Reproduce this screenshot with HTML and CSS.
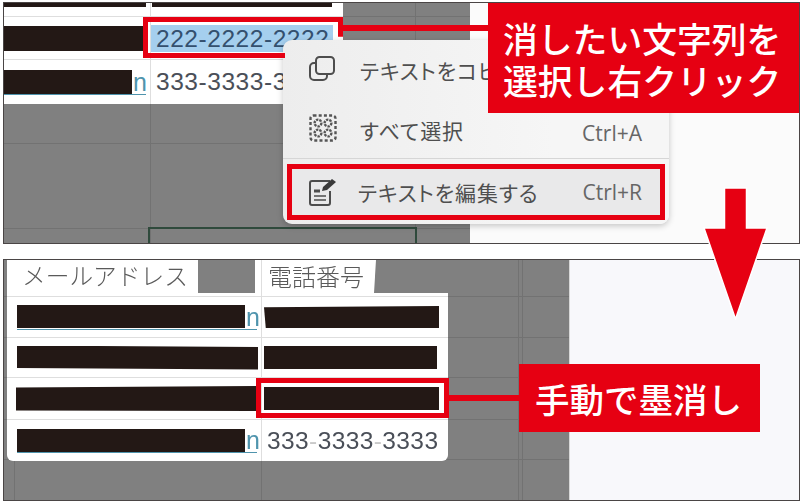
FILE: index.html
```html
<!DOCTYPE html>
<html lang="ja">
<head>
    <meta charset="UTF-8">
    <meta name="viewport" content="width=device-width, initial-scale=1.0">
    <title>手動で墨消し</title>
    <link rel="stylesheet" href="styles.css">
</head>
<body>
    <div class="page">
        <!-- Top shot: context menu over the sheet -->
        <div class="shot">
            <div class="sheet sheet-top">
                <div class="table table-top">
                    <div class="cell"><span class="bar bar-t1"></span></div>
                    <div class="cell col2"><span class="bar bar-t2"></span></div>
                    <div class="cell line"><span class="bar bar-t3"></span></div>
                    <div class="cell col2 line"><span class="selected">222-2222-2222</span></div>
                    <div class="cell line"><span class="link link-top"><span class="bar bar-t4"></span><span class="link-n">n</span></span></div>
                    <div class="cell col2 line"><span class="phone phone-top">333-3333-3333</span></div>
                </div>
                <div class="active-cell"></div>
            </div>
            <div class="blank blank-top"></div>

            <div class="menu">
                <div class="menu-item">
                    <svg class="icon" viewBox="0 0 28 28" fill="none" stroke="#4d4d4d" stroke-width="2">
                        <rect x="7" y="1" width="18" height="17" rx="3.5"/>
                        <path d="M7 7H5a4 4 0 0 0-4 4v9a4 4 0 0 0 4 4h9a4 4 0 0 0 4-4v-2"/>
                    </svg>
                    <span class="menu-text">テキストをコピー</span>
                </div>
                <div class="menu-item item-all">
                    <svg class="icon" viewBox="0 0 28 28" fill="none" stroke="#555" stroke-width="2.4">
                        <rect x="1.5" y="1.5" width="25" height="25" rx="3" stroke-dasharray="3 2.2"/>
                        <circle cx="9" cy="9" r="3.4" stroke-dasharray="2.4 1"/>
                        <circle cx="19" cy="9" r="3.4" stroke-dasharray="2.4 1"/>
                        <circle cx="9" cy="19" r="3.4" stroke-dasharray="2.4 1"/>
                        <circle cx="19" cy="19" r="3.4" stroke-dasharray="2.4 1"/>
                    </svg>
                    <span class="menu-text text-all">すべて選択</span>
                    <span class="shortcut shortcut-all">Ctrl+A</span>
                </div>
                <div class="menu-sep"></div>
                <div class="menu-item item-edit">
                    <svg class="icon icon-edit" viewBox="0 0 28 28" fill="none" stroke="#4d4d4d" stroke-width="2">
                        <path d="M21 3H3a2 2 0 0 0-2 2v20a2 2 0 0 0 2 2h16a2 2 0 0 0 2-2V13"/>
                        <path d="M5 18h12M5 22h12" stroke-width="1.6"/>
                        <path d="M5 13h6" stroke-width="3"/>
                        <path d="M13 13l1-4 9-8 4 3-9 8z" fill="#3a3a3a" stroke="none"/>
                    </svg>
                    <span class="menu-text">テキストを編集する</span>
                    <span class="shortcut">Ctrl+R</span>
                </div>
            </div>

            <div class="red-box box-selected"></div>
            <div class="wire wire-top"></div>
            <div class="callout callout-top">消したい文字列を<br>選択し右クリック</div>
        </div>

        <!-- Bottom shot: cell blacked out by hand -->
        <div class="shot shot-bottom">
            <div class="sheet sheet-bottom">
                <div class="table table-bottom">
                    <div class="cell head">
                        <span class="tab tab-mail">メールアドレス</span>
                        <span class="patch patch-mail"></span>
                    </div>
                    <div class="cell col2 head">
                        <span class="tab tab-tel">電話番号</span>
                        <span class="patch patch-tel"></span>
                    </div>
                    <div class="cell line"><span class="link link-bottom"><span class="bar bar-b1"></span><span class="link-n">n</span></span></div>
                    <div class="cell col2 line"><span class="bar bar-b2"></span></div>
                    <div class="cell line"><span class="bar bar-b3"></span></div>
                    <div class="cell col2 line"><span class="bar bar-b4"></span></div>
                    <div class="cell line"><span class="bar bar-b5"></span></div>
                    <div class="cell col2 line"><span class="bar bar-b6"></span></div>
                    <div class="cell line"><span class="link link-bottom"><span class="bar bar-b7"></span><span class="link-n">n</span></span></div>
                    <div class="cell col2 line"><span class="phone phone-bottom">333<i>-</i>3333<i>-</i>3333</span></div>
                </div>
            </div>
            <div class="blank blank-bottom"></div>

            <div class="red-box box-manual"></div>
            <div class="wire wire-bottom"></div>
            <div class="callout callout-bottom">手動で墨消し</div>
        </div>

        <svg class="arrow" viewBox="0 0 67 134">
            <polygon points="22.5,2 44.5,2 44.5,42 65,42 33.5,133 2,42 22.5,42" fill="#e60012" stroke="#fff" stroke-width="1.5"/>
        </svg>
    </div>
</body>
</html>
```

FILE: styles.css
```css
body {
    margin: 0;
    background-color: #fff;
    font-family: "Noto Sans CJK JP", "Liberation Sans", sans-serif;
}
.page {
    position: relative;
    width: 797px;
    height: 501px;
    padding: 2px 0 0 3px;
    filter: blur(0.35px);
}
.shot {
    position: relative;
    display: flex;
    height: 240px;
    border: 1px solid #4a4545;
    overflow: hidden;
}
.shot-bottom {
    margin-top: 15px;
}

/* gray excel area */
.sheet {
    background-color: #808080;
}
.sheet-top {
    width: 466px;
    background-image:
        linear-gradient(#727272, #727272),
        linear-gradient(#727272, #727272),
        linear-gradient(#727272, #727272),
        linear-gradient(#727272, #727272),
        linear-gradient(#727272, #727272);
    background-repeat: no-repeat;
    background-size: 100% 1px, 100% 1px, 100% 1px, 1px 100%, 1px 100%;
    background-position: 0 13px, 0 140px, 0 225px, 146px 0, 411px 0;
}
.sheet-bottom {
    width: 565px;
    padding-left: 3px;
    box-sizing: border-box;
    background-image:
        linear-gradient(#727272, #727272),
        linear-gradient(#727272, #727272),
        linear-gradient(#727272, #727272),
        linear-gradient(#727272, #727272),
        linear-gradient(#727272, #727272),
        linear-gradient(#727272, #727272),
        linear-gradient(#727272, #727272),
        linear-gradient(#727272, #727272),
        linear-gradient(#727272, #727272);
    background-repeat: no-repeat;
    background-size: 100% 1px, 100% 1px, 100% 1px, 100% 1px, 100% 1px, 1px 100%, 1px 100%, 1px 100%, 1px 100%;
    background-position: 0 36px, 0 77px, 0 117px, 0 159px, 0 199px, 10px 0, 257px 0, 514px 0, 518px 0;
}
.blank {
    flex: 1;
}
.blank-top {
    background-color: #fbfbfb;
}
.blank-bottom {
    background-color: #f8f8fb;
    border-left: 1px solid #d8d8d8;
}

/* table */
.table {
    display: grid;
    background-color: #fff;
}
.table-top {
    width: 339px;
    grid-template-columns: 146px 193px;
    grid-template-rows: 13px 43px 45px;
}
.table-bottom {
    width: 441px;
    grid-template-columns: 254px 187px;
    grid-template-rows: 36px 41px 40px 42px 42px;
    border-radius: 0 0 6px 6px;
    overflow: hidden;
}
.cell {
    display: flex;
    align-items: center;
    min-width: 0;
}
.col2 {
    border-left: 1px solid #dedede;
}
.line {
    border-top: 1px solid #dedede;
}
.head {
    align-items: flex-start;
}

.bar {
    display: block;
    flex: none;
    background-color: #231815;
}
.bar-t1 { width: 142px; height: 4px; margin-bottom: 9px; }
.bar-t2 { width: 180px; height: 4px; margin: 0 0 9px 1px; }
.bar-t3 { width: 139px; height: 25px; }
.bar-t4 { width: 128px; height: 24px; }
.bar-b1, .bar-b7 { width: 228px; height: 23px; }
.bar-b2 { width: 175px; height: 22px; margin-left: 2px; clip-path: polygon(0 6%, 100% 0, 100% 100%, 1% 100%); }
.bar-b3 { width: 241px; height: 24px; margin-left: 10px; clip-path: polygon(0 0, 100% 6%, 100% 100%, 0 94%); }
.bar-b4 { width: 173px; height: 23px; margin-left: 2px; }
.bar-b5 { width: 240px; height: 25px; margin-left: 9px; clip-path: polygon(0 6%, 100% 0, 100% 100%, 0 98%); }
.bar-b6 { width: 175px; height: 23px; margin-left: 2px; }

.selected {
    width: 177px;
    height: 27px;
    padding-left: 5px;
    background-color: #a5cfee;
    color: #34506e;
    font: 24.5px/27px "Liberation Sans", sans-serif;
    letter-spacing: 0.55px;
    white-space: nowrap;
}
.phone {
    color: #4a4f58;
    font-family: "Liberation Sans", sans-serif;
    font-size: 24.5px;
    white-space: nowrap;
}
.phone i {
    font-style: normal;
    color: #c9c9c9;
}
.phone-top {
    margin-left: 5px;
    letter-spacing: 0.55px;
}
.phone-bottom {
    margin-left: 5px;
    letter-spacing: 0.4px;
}
.link {
    display: flex;
    align-items: center;
    border-bottom: 1px solid #4f94ad;
}
.link-top {
    width: 142px;
}
.link-bottom {
    width: 240px;
    margin-left: 10px;
    height: 24px;
}
.link-n {
    margin-left: 1px;
    color: #4f94ad;
    font: 25px/24px "Liberation Sans", sans-serif;
}

/* header row of the bottom table */
.tab {
    color: #5a5a5a;
    font-weight: 300;
    white-space: nowrap;
}
.tab-mail {
    flex: 1;
    padding-left: 15px;
    font-size: 23.7px;
    line-height: 30px;
}
.tab-tel {
    width: 112px;
    flex: none;
    padding-left: 6px;
    box-sizing: border-box;
    font-size: 24px;
    line-height: 31px;
}
.patch {
    display: block;
    height: 33px;
    background-color: #808080;
}
.patch-mail {
    width: 57px;
    margin-right: 6px;
}
.patch-tel {
    flex: 1;
    clip-path: polygon(2px 0, 100% 0, 100% 100%, 0 100%);
}

/* context menu */
.active-cell {
    position: absolute;
    left: 144px;
    top: 224px;
    width: 267px;
    height: 20px;
    border: 1px solid #2f4a3c;
    box-shadow: inset 0 0 0 1px #2f4a3c;
}
.menu {
    position: absolute;
    left: 279px;
    top: 37px;
    width: 386px;
    height: 184px;
    box-sizing: border-box;
    padding-top: 5px;
    border-radius: 9px;
    background: linear-gradient(90deg, #ededed, #f6f6f6 70%);
    box-shadow: 0 2px 6px rgba(0, 0, 0, 0.22);
}
.menu-item {
    display: flex;
    align-items: center;
    height: 50px;
    padding: 0 27px 0 26px;
}
.item-all {
    margin-top: 8px;
}
.text-all {
    padding-top: 4px;
}
.shortcut-all {
    padding-top: 10px;
}
.item-edit {
    height: 56px;
    margin: 5px 4px 0;
    padding: 0 18px 0 17px;
    box-sizing: border-box;
    border: 5px solid #e60012;
    background-color: #e9e9ea;
}
.menu-sep {
    height: 1px;
    margin-top: 5px;
    background-color: #d6d6d6;
}
.icon {
    width: 28px;
    height: 28px;
    margin-right: 23px;
    flex: none;
}
.icon-edit {
    margin-right: 21px;
}
.menu-text {
    color: #4f4f4f;
    font-size: 21px;
    font-feature-settings: "palt";
    letter-spacing: 0.9px;
    white-space: nowrap;
}
.shortcut {
    margin-left: auto;
    color: #666;
    font-family: "Open Sans", sans-serif;
    font-size: 21px;
}

/* red annotations */
.red-box {
    position: absolute;
    box-sizing: border-box;
    border: 5px solid #e60012;
}
.box-selected {
    left: 139px;
    top: 14px;
    width: 200px;
    height: 41px;
    clip-path: polygon(0 0, 100% 0, 100% 48%, 71% 48%, 71% 100%, 0 100%);
}
.box-manual {
    left: 252px;
    top: 118px;
    width: 193px;
    height: 40px;
}
.wire {
    position: absolute;
    height: 6px;
    background-color: #e60012;
}
.wire-top {
    left: 336px;
    top: 22px;
    width: 150px;
}
.wire-bottom {
    left: 441px;
    top: 135px;
    width: 76px;
}
.callout {
    position: absolute;
    box-sizing: border-box;
    background-color: #e60012;
    color: #fff;
    font-weight: 500;
    white-space: nowrap;
}
.callout-top {
    left: 484px;
    top: 0;
    width: 311px;
    height: 110px;
    padding: 14px 0 0 15px;
    font-size: 34.8px;
    line-height: 42px;
}
.callout-bottom {
    left: 515px;
    top: 104px;
    width: 241px;
    height: 68px;
    padding-left: 16px;
    font-size: 34.5px;
    line-height: 68px;
}
.arrow {
    position: absolute;
    left: 702px;
    top: 186px;
    width: 67px;
    height: 134px;
}
```
